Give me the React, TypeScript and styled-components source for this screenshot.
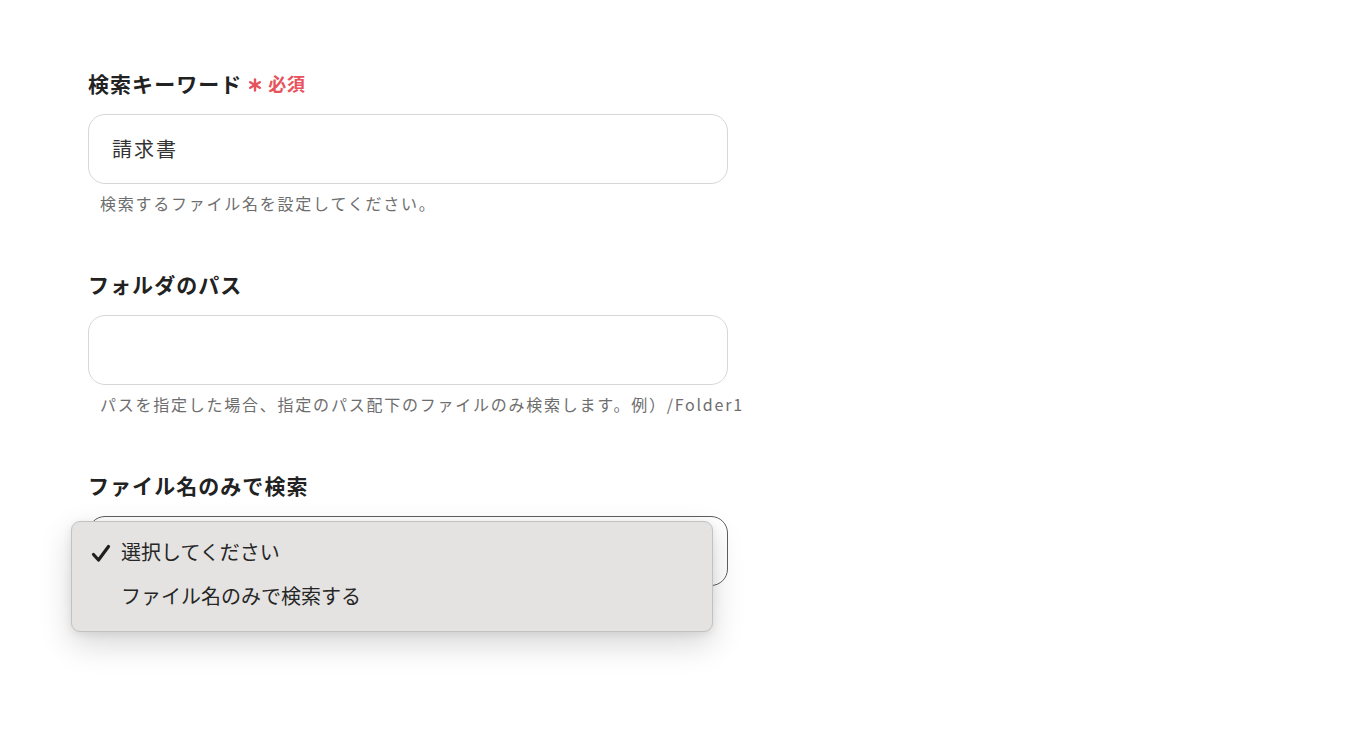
import React from 'react'
import styled, { createGlobalStyle } from 'styled-components'

const GlobalStyle = createGlobalStyle`
  body {
    margin: 0;
    background: #ffffff;
    font-family: "Noto Sans CJK JP", "Noto Sans", sans-serif;
    color: #222222;
  }
`

const Page = styled.div`
  box-sizing: border-box;
  min-height: 732px;
  padding: 70px 0 0 88px;
  display: flex;
  flex-direction: column;
  gap: 55px;
  width: 728px;
`

const Field = styled.div`
  display: flex;
  flex-direction: column;
  width: 640px;
`

const Label = styled.label`
  box-sizing: border-box;
  display: flex;
  align-items: center;
  height: 28px;
  padding-bottom: 3px;
  margin-bottom: 16px;
  font-size: 21px;
  font-weight: 700;
  letter-spacing: 0.05em;
  color: #222222;
  white-space: nowrap;
`

const Required = styled.span`
  display: inline-flex;
  align-items: center;
  margin-left: 6px;
  font-size: 18px;
  font-weight: 700;
  letter-spacing: 0.03em;
  color: #e8525c;

  svg {
    margin: 5px 6px 0 0;
  }
`

const Input = styled.div<{ $focused?: boolean }>`
  box-sizing: border-box;
  height: 70px;
  border: 1px solid ${p => (p.$focused ? '#5f5f5f' : '#d6d7db')};
  border-radius: 17px;
  padding: 0 23px 2px;
  display: flex;
  align-items: center;
  font-size: 20px;
  letter-spacing: 0.1em;
  color: #333333;
  background: #ffffff;
`

const Help = styled.p`
  box-sizing: border-box;
  height: 32px;
  margin: 0 0 0 12px;
  padding-top: 7px;
  font-size: 16px;
  line-height: 24px;
  letter-spacing: 0.11em;
  color: #6e6e6e;
  white-space: nowrap;
`

const SelectWrap = styled.div`
  position: relative;
`

const Menu = styled.ul`
  position: absolute;
  z-index: 10;
  left: -17px;
  top: 5px;
  width: 642px;
  box-sizing: border-box;
  margin: 0;
  padding: 7px 0 14px;
  list-style: none;
  background: #e4e3e1;
  border: 1px solid #c2c2c2;
  border-radius: 9px;
  box-shadow: 0 12px 32px rgba(0, 0, 0, 0.16), 0 2px 8px rgba(0, 0, 0, 0.08);
`

const Option = styled.li`
  display: flex;
  align-items: center;
  height: 44px;
  padding-left: 49px;
  position: relative;
  font-size: 20px;
  color: #262626;

  svg {
    position: absolute;
    left: 19px;
    top: 15px;
  }
`

const Check = () => (
  <svg width="20" height="19" viewBox="0 0 20 19">
    <path d="M2.5 10.5 L7.5 16 L17.5 2.5" fill="none" stroke="#1f1f1f" strokeWidth="3.2" strokeLinecap="round" strokeLinejoin="round" />
  </svg>
)

const Asterisk = () => (
  <svg width="14" height="14" viewBox="0 0 14 14">
    <g stroke="#e8525c" strokeWidth="2.4" strokeLinecap="round">
      <line x1="7" y1="1.5" x2="7" y2="12.5" />
      <line x1="2.2" y1="4.2" x2="11.8" y2="9.8" />
      <line x1="2.2" y1="9.8" x2="11.8" y2="4.2" />
    </g>
  </svg>
)

export default function App() {
  return (
    <>
      <GlobalStyle />
      <Page>
        <Field>
          <Label>
            検索キーワード
            <Required>
              <Asterisk />
              必須
            </Required>
          </Label>
          <Input>請求書</Input>
          <Help>検索するファイル名を設定してください。</Help>
        </Field>

        <Field>
          <Label>フォルダのパス</Label>
          <Input />
          <Help>パスを指定した場合、指定のパス配下のファイルのみ検索します。例）/Folder1</Help>
        </Field>

        <Field>
          <Label>ファイル名のみで検索</Label>
          <SelectWrap>
            <Input $focused />
            <Menu>
              <Option>
                <Check />
                選択してください
              </Option>
              <Option>ファイル名のみで検索する</Option>
            </Menu>
          </SelectWrap>
        </Field>
      </Page>
    </>
  )
}
